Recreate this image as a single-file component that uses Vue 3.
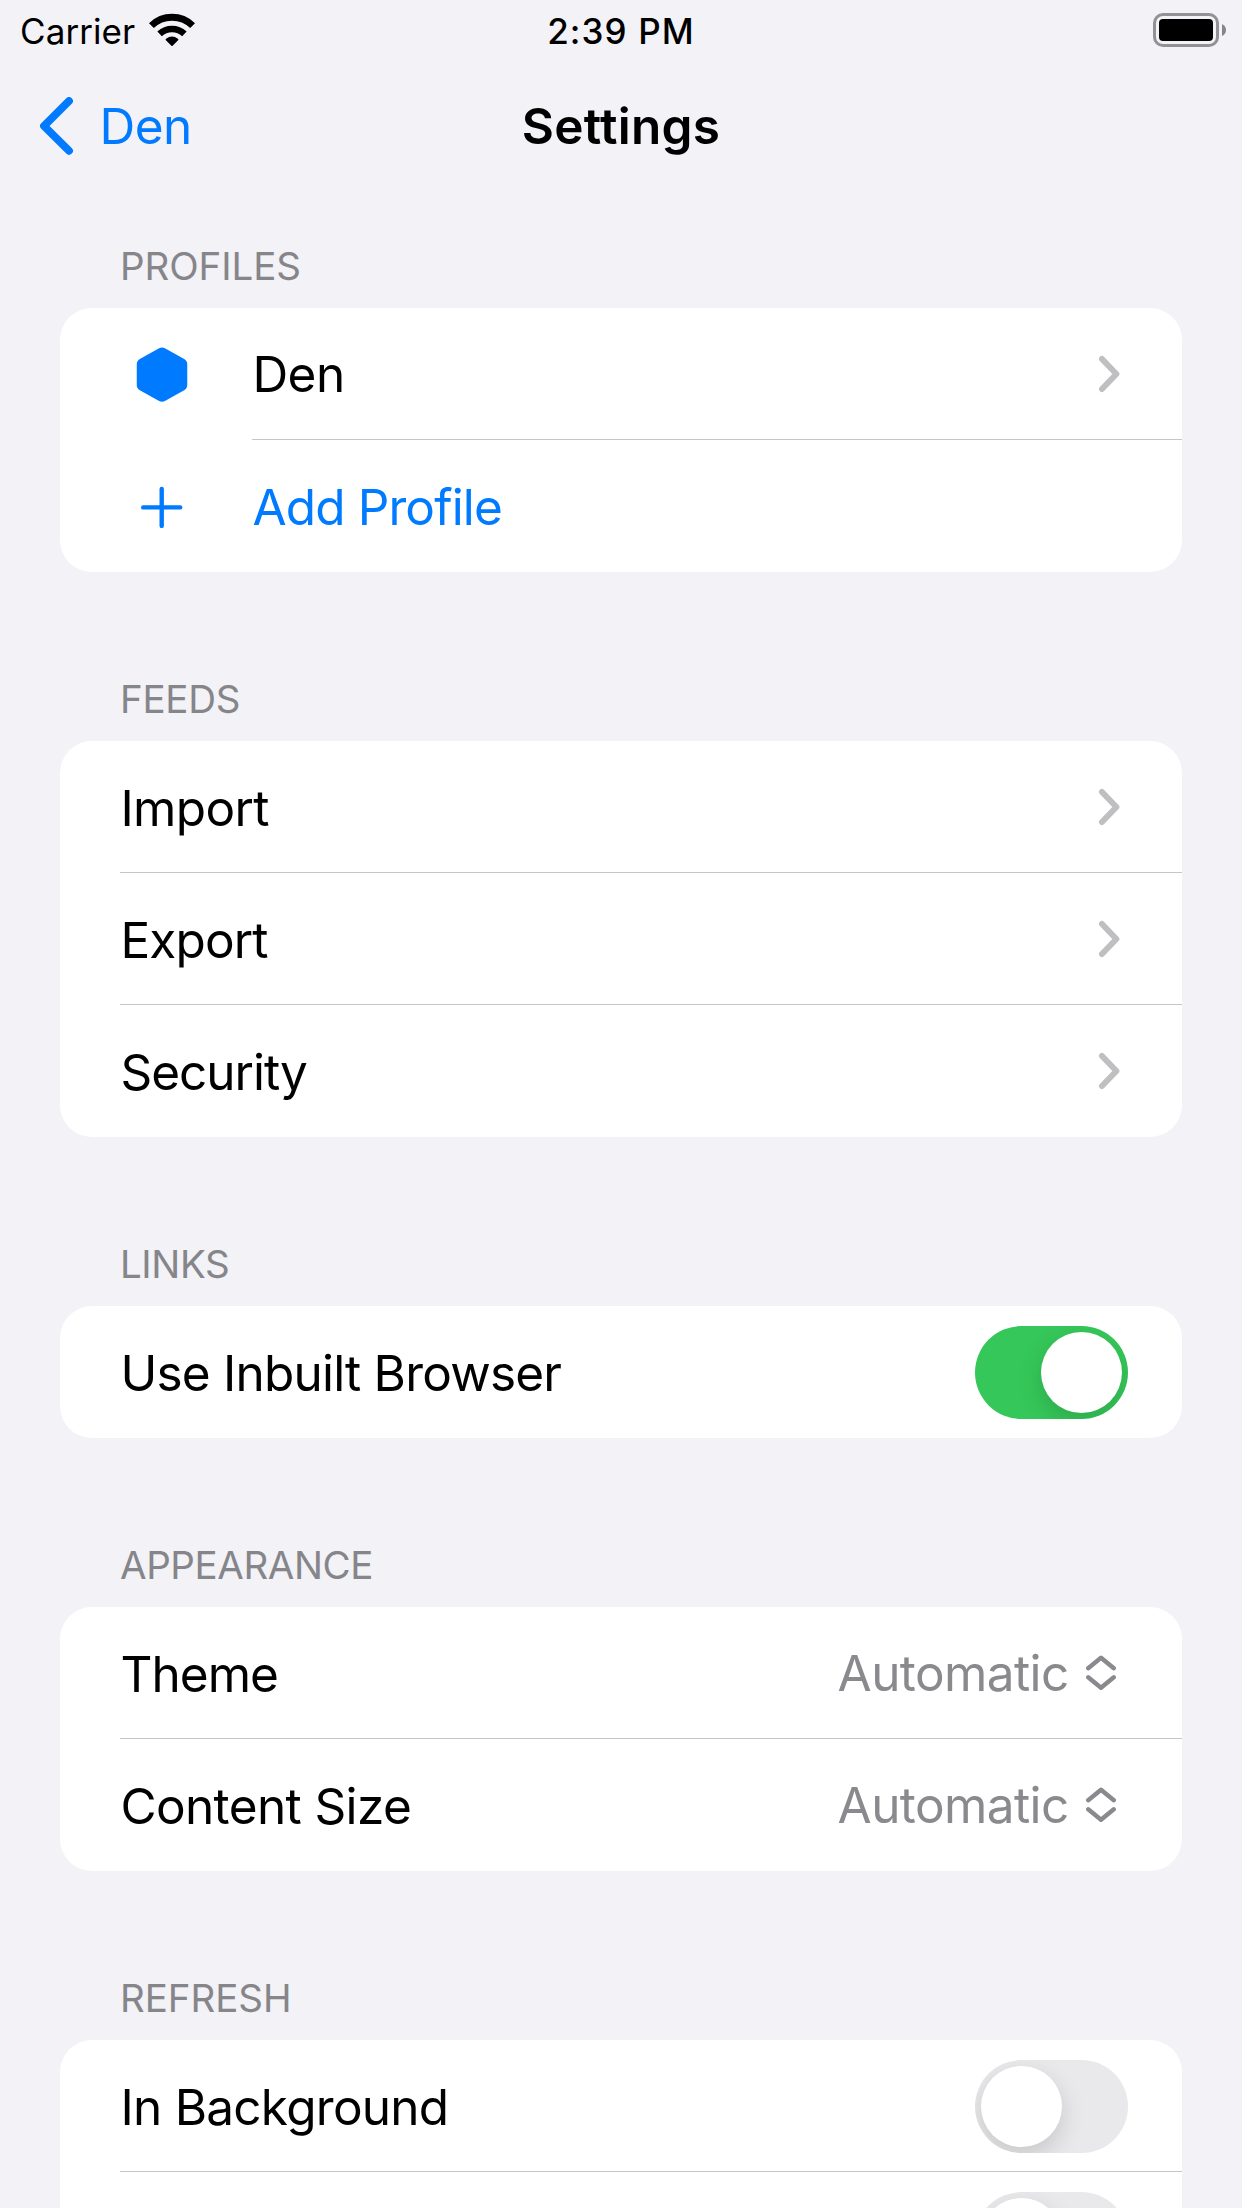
<script setup>
import { ref } from 'vue'

// `track` is the letter spacing, in px, of each label
const sections = ref([
  {
    title: 'PROFILES',
    track: -0.06,
    rows: [
      { label: 'Den', track: -0.54, icon: 'hexagon', accessory: 'chevron' },
      { label: 'Add Profile', track: -0.86, icon: 'plus', tint: true },
    ],
  },
  {
    title: 'FEEDS',
    track: -0.27,
    rows: [
      { label: 'Import', track: -0.62, accessory: 'chevron' },
      { label: 'Export', track: -0.84, accessory: 'chevron' },
      { label: 'Security', track: -1, accessory: 'chevron' },
    ],
  },
  {
    title: 'LINKS',
    track: -0.4,
    rows: [{ label: 'Use Inbuilt Browser', track: -0.79, accessory: 'toggle', on: true }],
  },
  {
    title: 'APPEARANCE',
    track: -0.4,
    rows: [
      { label: 'Theme', track: -0.94, accessory: 'picker', value: 'Automatic' },
      { label: 'Content Size', track: -0.62, accessory: 'picker', value: 'Automatic' },
    ],
  },
  {
    title: 'REFRESH',
    track: -0.04,
    rows: [
      { label: 'In Background', track: -0.74, accessory: 'toggle', on: false },
      { label: '', track: 0, accessory: 'toggle', on: false },
    ],
  },
])
</script>

<template>
  <div class="screen">
    <header class="status">
      <div class="carrier">
        <span>Carrier</span>
        <svg class="wifi" width="46" height="34" viewBox="0 0 46 34">
          <path d="M2.4 12.6A29.6 29.6 0 0 1 43.6 12.6" fill="none" stroke="#000" stroke-width="6.8" />
          <path d="M10.6 20.9A18.2 18.2 0 0 1 35.4 20.9" fill="none" stroke="#000" stroke-width="6.6" />
          <path d="M16.9 27.3Q16.1 26.5 17.1 25.8Q23 21.4 28.9 25.8Q29.9 26.5 29.1 27.3L23.6 32.8Q23 33.4 22.4 32.8Z" />
        </svg>
      </div>
      <span class="clock">2:39 PM</span>
      <svg class="battery" width="74" height="34" viewBox="0 0 74 34">
        <rect x="1.5" y="1.5" width="63" height="31" rx="8.5" fill="none" stroke="#929295" stroke-width="3" />
        <rect x="6" y="6" width="54" height="22" rx="4" />
        <path d="M69 11Q73 13 73 17T69 23Z" fill="#85858a" />
      </svg>
    </header>

    <nav class="nav">
      <a class="back">
        <svg width="34" height="58" viewBox="0 0 34 58">
          <path d="M29 4L4 28.9L29 53.8" fill="none" stroke="#007aff" stroke-width="7.8" stroke-linecap="round" stroke-linejoin="round" />
        </svg>
        <span>Den</span>
      </a>
      <h1>Settings</h1>
    </nav>

    <main>
      <section v-for="section in sections" :key="section.title">
        <h2 :style="{ letterSpacing: section.track + 'px' }">{{ section.title }}</h2>
        <div class="card">
          <div v-for="row in section.rows" :key="row.label" class="row">
            <div v-if="row.icon" class="icon">
              <svg v-if="row.icon === 'hexagon'" width="52" height="56" viewBox="-26 -28 52 56">
                <path d="M0 -20.4L19.25 -9.7V11.1L0 21.8L-19.25 11.1V-9.7Z" fill="#007aff" stroke="#007aff" stroke-width="12" stroke-linejoin="round" />
              </svg>
              <svg v-else width="52" height="56" viewBox="-26 -28 52 56">
                <path d="M-18.8 1.4H18.2M-0.3 -17.1V19.9" fill="none" stroke="#007aff" stroke-width="4.4" stroke-linecap="round" />
              </svg>
            </div>
            <div class="body">
              <span class="label" :class="{ tint: row.tint, high: row.icon === 'hexagon' }" :style="{ letterSpacing: row.track + 'px' }">{{ row.label }}</span>
              <svg v-if="row.accessory === 'chevron'" class="chevron" width="22" height="38" viewBox="0 0 22 38">
                <path d="M4 4L18.4 19L4 34" fill="none" stroke="#bfbfc1" stroke-width="6" stroke-linecap="round" stroke-linejoin="round" />
              </svg>
              <div v-if="row.accessory === 'picker'" class="picker">
                <span>{{ row.value }}</span>
                <svg width="30" height="36" viewBox="0 0 30 36">
                  <path d="M2.2 13.2L15 2.8L27.8 13.2M2.2 22.3L15 32.7L27.8 22.3" fill="none" stroke="#8a8a8e" stroke-width="4.4" stroke-linecap="round" stroke-linejoin="round" />
                </svg>
              </div>
              <div v-if="row.accessory === 'toggle'" class="toggle" :class="{ on: row.on }">
                <span class="knob"></span>
              </div>
            </div>
          </div>
        </div>
      </section>
    </main>
  </div>
</template>

<style>
body {
  margin: 0;
  background: #f2f2f7;
}
</style>

<style scoped>
.screen {
  width: 1242px;
  height: 2208px;
  overflow: hidden;
  background: #f2f2f7;
  color: #000;
  font-family: Inter, "Liberation Sans", sans-serif;
}
svg {
  display: block;
  flex: none;
}
.status {
  display: grid;
  grid-template-columns: 1fr auto 1fr;
  height: 60px;
  font-size: 35px;
  line-height: 62px;
}
.carrier {
  display: flex;
  padding-left: 20px;
  letter-spacing: 0.08px;
}
.wifi {
  margin: 13px 0 0 14px;
}
.clock {
  font-weight: 500;
  letter-spacing: 1.1px;
}
.battery {
  justify-self: end;
  margin: 13px 15px 0 0;
}
.nav {
  display: grid;
  grid-template-columns: 1fr auto 1fr;
  height: 132px;
  font-size: 49.5px;
  line-height: 132px;
}
.back {
  display: flex;
  align-items: center;
  padding-left: 40px;
  color: #007aff;
  letter-spacing: -0.54px;
}
.back span {
  margin-left: 25.5px;
}
h1 {
  margin: 0;
  font-size: inherit;
  font-weight: 600;
  letter-spacing: 0.27px;
}
main {
  padding: 0 60px;
}
section {
  margin-bottom: 53px;
}
h2 {
  box-sizing: border-box;
  height: 116px;
  margin: 0;
  padding-left: 60px;
  font-size: 38.5px;
  font-weight: 400;
  line-height: 148px;
  color: #85858a;
}
.card {
  overflow: hidden;
  border-radius: 32px;
  background: #fff;
}
.row {
  display: flex;
  height: 132px;
  padding-left: 60px;
}
.icon {
  display: flex;
  align-items: center;
  width: 132px;
  padding-left: 16px;
  box-sizing: border-box;
}
.body {
  display: flex;
  flex: 1;
  align-items: center;
  justify-content: space-between;
  box-sizing: border-box;
  height: 132px;
}
.row:not(:last-child) .body {
  box-shadow: inset 0 -1px #c6c6c8;
}
.label {
  align-self: flex-start;
  padding-left: 0.4px;
  font-size: 49.5px;
  line-height: 134px;
  white-space: nowrap;
}
.label.high {
  line-height: 132px;
}
.label.tint {
  color: #007aff;
}
.chevron {
  margin-right: 62px;
}
.picker {
  display: flex;
  align-items: center;
  margin-right: 66px;
  color: #8a8a8e;
  font-size: 49.5px;
  line-height: 132px;
  letter-spacing: -0.6px;
}
.picker svg {
  margin: 0 0 1px 17.4px;
}
.toggle {
  display: flex;
  box-sizing: border-box;
  width: 153px;
  height: 93px;
  margin: 1px 54px 0 0;
  padding: 6px;
  overflow: hidden;
  border-radius: 47px;
  background: #e9e9eb;
}
.toggle.on {
  justify-content: flex-end;
  background: #35c759;
}
.knob {
  width: 81px;
  height: 81px;
  border-radius: 50%;
  background: #fff;
  box-shadow: 0 9px 24px rgba(0, 0, 0, 0.15);
}
</style>
